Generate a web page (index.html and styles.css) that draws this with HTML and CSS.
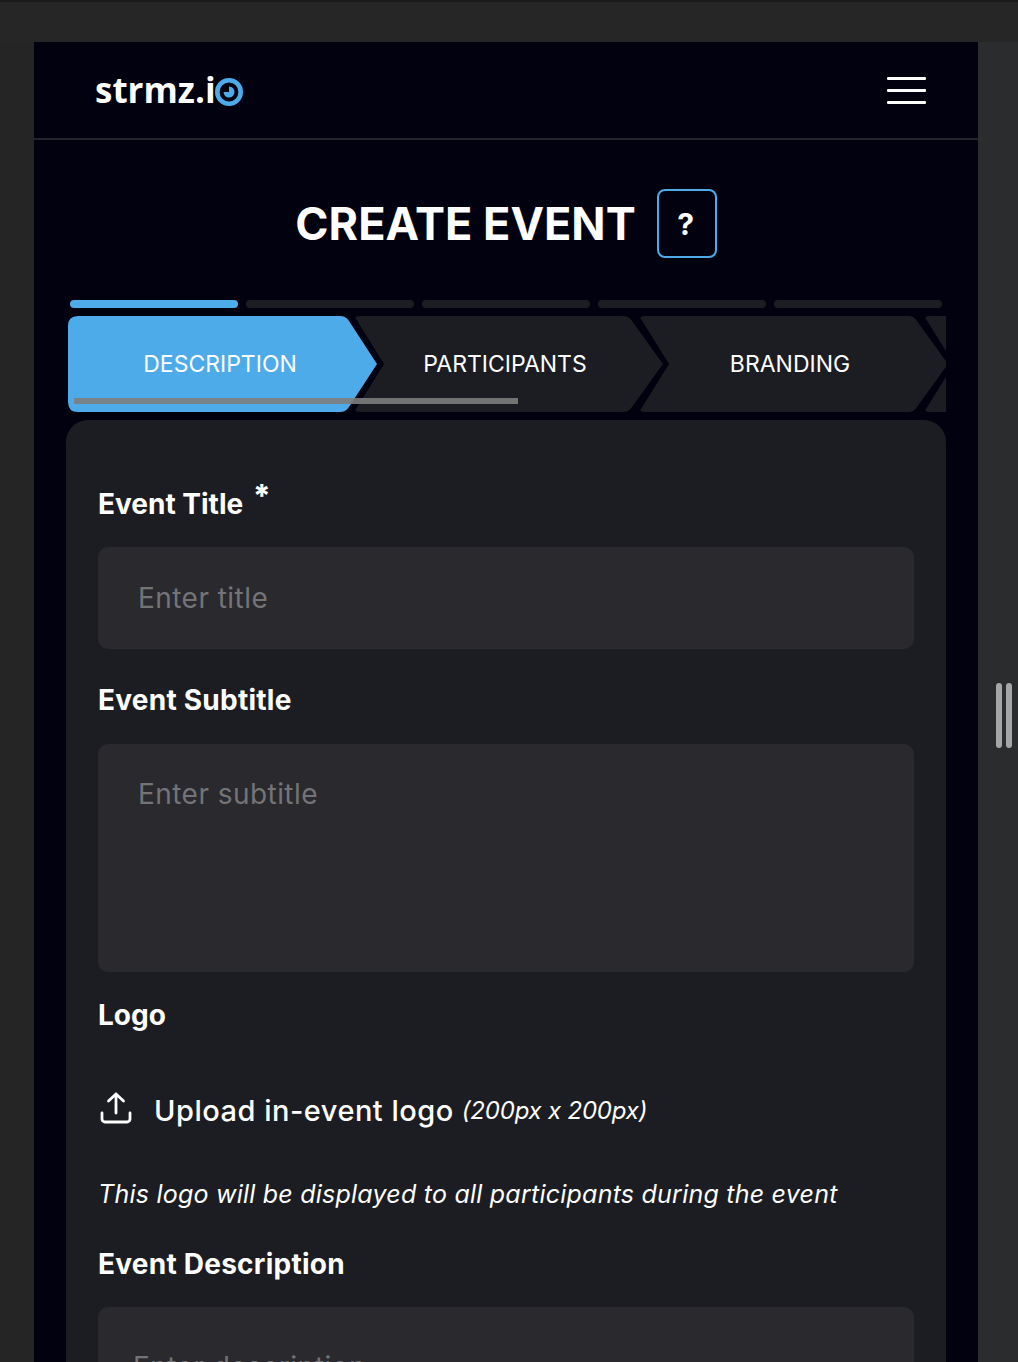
FILE: index.html
```html
<!DOCTYPE html>
<html lang="en">
<head>
<meta charset="utf-8">
<title>Create Event</title>
<link rel="stylesheet" href="styles.css">
</head>
<body>
<div class="chrome-top"></div>
<div class="stage">
  <div class="side-left"></div>
  <div class="frame">
    <header class="topbar">
      <div class="logo"><span class="logo-text">strmz.i</span><svg class="logo-eye" viewBox="0 0 28 28" width="28" height="28"><circle cx="14" cy="14" r="11.700" fill="none" stroke="#4eabe9" stroke-width="4.600"/><path d="M14 8.500a5.500 5.500 0 1 1-5.500 5.500H14z" fill="#4eabe9"/></svg></div>
      <div class="burger"><span class="burger-line"></span><span class="burger-line"></span><span class="burger-line"></span></div>
    </header>
    <main class="content">
      <div class="title-row">
        <h1 class="title">CREATE EVENT</h1>
        <div class="help">?</div>
      </div>
      <div class="progress">
        <span class="seg seg-on"></span><span class="seg"></span><span class="seg"></span><span class="seg"></span><span class="seg"></span>
      </div>
      <div class="tabs">
        <div class="tab tab-first">
          <svg class="tab-shape" viewBox="0 0 312 96" width="312" height="96"><path d="M10 0H272Q278 0 281 5L309 48L281 91Q278 96 272 96H10Q0 96 0 86V10Q0 0 10 0Z" fill="#4eabe9"/></svg>
          <span class="tab-label">DESCRIPTION</span>
        </div>
        <div class="tab">
          <svg class="tab-shape" viewBox="0 0 312 96" width="312" height="96"><path d="M5 0H268Q274 0 277 5L308 48L277 91Q274 96 268 96H5Q-1 96 1 93L29 48L1 3Q-1 0 5 0Z" fill="#1c1d22"/></svg>
          <span class="tab-label">PARTICIPANTS</span>
        </div>
        <div class="tab">
          <svg class="tab-shape" viewBox="0 0 312 96" width="312" height="96"><path d="M5 0H268Q274 0 277 5L308 48L277 91Q274 96 268 96H5Q-1 96 1 93L29 48L1 3Q-1 0 5 0Z" fill="#1c1d22"/></svg>
          <span class="tab-label">BRANDING</span>
        </div>
        <div class="tab">
          <svg class="tab-shape" viewBox="0 0 312 96" width="312" height="96"><path d="M5 0H268Q274 0 277 5L308 48L277 91Q274 96 268 96H5Q-1 96 1 93L29 48L1 3Q-1 0 5 0Z" fill="#1c1d22"/></svg>
        </div>
        <div class="tabs-scroll"></div>
      </div>
      <section class="card">
        <label class="label label-title">Event Title <span class="req">*</span></label>
        <input class="input" type="text" placeholder="Enter title">
        <label class="label label-sub">Event Subtitle</label>
        <textarea class="input area" placeholder="Enter subtitle"></textarea>
        <div class="label label-logo">Logo</div>
        <div class="upload">
          <svg class="upload-icon" viewBox="0 0 32 32" width="32" height="32" fill="none" stroke="#fff" stroke-width="2.800" stroke-linecap="round" stroke-linejoin="round"><path d="M16 21V2M8.500 9L16 2l7.500 7M2 21v6a3 3 0 0 0 3 3h22a3 3 0 0 0 3-3v-6"/></svg>
          <span class="upload-text">Upload in-event logo</span>
          <em class="upload-hint">(200px x 200px)</em>
        </div>
        <p class="note">This logo will be displayed to all participants during the event</p>
        <label class="label label-desc">Event Description</label>
        <textarea class="input area area-desc" placeholder="Enter description"></textarea>
      </section>
    </main>
  </div>
  <div class="side-right"><span class="grip"></span><span class="grip"></span></div>
</div>
</body>
</html>
```
FILE: styles.css
```css
* { box-sizing: border-box; }
html, body { margin: 0; height: 1362px; overflow: hidden; }
body { background: #252526; font-family: Inter, "Noto Sans", sans-serif; color: #fff; }

.chrome-top { height: 42px; background: #262626; border-top: 2px solid #1b1b1c; }
.stage { display: flex; height: 1320px; }
.side-left { width: 34px; background: #252526; }
.side-right { width: 40px; background: #2b2c2e; display: flex; gap: 4px; align-items: flex-start; padding: 641px 0 0 18px; }
.grip { width: 6px; height: 65px; border-radius: 3px; background: #a6a6a6; }
.frame { width: 944px; background: #01010f; overflow: hidden; }

.topbar { height: 98px; border-bottom: 2px solid #24242d; display: flex; justify-content: space-between; padding: 0 52px 0 61px; }
.logo { display: flex; align-items: flex-start; padding-top: 28px; }
.logo-text { font-family: "Open Sans", sans-serif; font-weight: 700; font-size: 35px; line-height: 40px; }
.logo-eye { margin: 8px 0 0 -1px; }
.burger { display: flex; flex-direction: column; gap: 9px; padding-top: 35px; }
.burger-line { display: block; width: 39px; height: 3px; background: #fff; border-radius: 1px; }

.content { padding: 49px 32px 0; }
.title-row { display: flex; align-items: center; justify-content: center; gap: 21px; height: 69px; }
.title { margin: 0; font-size: 45px; font-weight: 700; line-height: 69px; }
.help { width: 60px; height: 69px; border: 2px solid #4eabe9; border-radius: 8px; display: flex; align-items: center; justify-content: center; font-size: 30px; font-weight: 700; padding-right: 2px; }

.progress { display: flex; gap: 8px; margin: 42px 4px 0; }
.seg { width: 168px; height: 8px; border-radius: 4px; background: #1c1d22; }
.seg-on { background: #4eabe9; }

.tabs { position: relative; display: flex; height: 96px; margin: 8px 0 0 2px; width: 878px; overflow: hidden; }
.tab { position: relative; flex: 0 0 285px; height: 96px; padding-left: 15px; width: 285px; }
.tab-first { flex-basis: 287px; padding-left: 17px; }
.tab-shape { position: absolute; left: 0; top: 0; overflow: visible; }
.tab-label { position: relative; display: block; width: 270px; text-align: center; font-size: 23px; line-height: 96px; white-space: nowrap; }
.tabs-scroll { position: absolute; left: 6px; top: 82px; width: 444px; height: 6px; background: rgba(125, 125, 125, .9); }

.card { margin: 8px 0 0; width: 880px; background: #1c1d22; border-radius: 22px 22px 0 0; padding: 62px 32px 0; }
.label { display: block; font-size: 28px; font-weight: 700; letter-spacing: .25px; line-height: 42px; height: 42px; margin: 0; }
.label-title { margin-bottom: 23px; letter-spacing: 0; }
.req { position: relative; top: -7px; left: 3px; font-size: 31px; font-weight: 800; }
.label-sub { margin: 30px 0 23px; }
.label-logo { margin-top: 22px; letter-spacing: 0; }
.label-desc { margin: 28px 0 22px; }
.input { display: block; width: 816px; height: 102px; border: 0; outline: 0; resize: none; border-radius: 10px; background: #29292e; color: #fff; font-family: Inter, "Noto Sans", sans-serif; font-size: 28px; letter-spacing: .45px; padding: 30px 40px; line-height: 40px; }
.input::placeholder { color: #747477; opacity: 1; }
.area { height: 228px; padding-top: 30px; }
.area-desc { padding: 40px 35px; }
.upload { display: flex; align-items: center; height: 42px; margin-top: 53px; }
.upload-icon { flex: none; margin: -5px 22px 0 2px; }
.upload-text { font-size: 29px; font-weight: 500; letter-spacing: .5px; }
.upload-hint { font-size: 24px; letter-spacing: -.2px; margin-left: 8px; }
.note { margin: 42px 0 0; font-size: 25px; font-style: italic; letter-spacing: .23px; line-height: 42px; height: 42px; white-space: nowrap; }
```
